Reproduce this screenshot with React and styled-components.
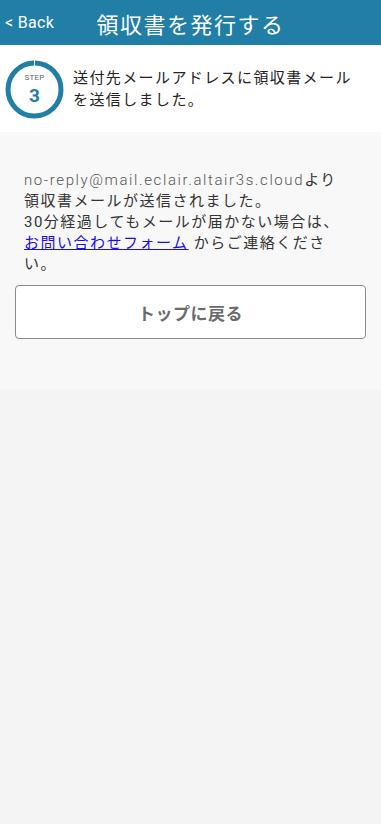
import React from "react";
import styled, { createGlobalStyle } from "styled-components";

const GlobalStyle = createGlobalStyle`
  html, body {
    margin: 0;
    padding: 0;
    background: #f4f4f4;
    font-family: Roboto, "Noto Sans CJK JP", sans-serif;
  }
`;

const Page = styled.div`
  min-height: 824px;
  background: #f4f4f4;
`;

const Header = styled.header`
  height: 45px;
  background: #217ea7;
  color: #fff;
  display: grid;
  grid-template-columns: 80px 1fr 80px;
  align-items: center;
`;

const BackLink = styled.a`
  padding-left: 5px;
  font-size: 16px;
  letter-spacing: 0.3px;
  color: #fff;
  text-decoration: none;
`;

const Title = styled.h1`
  margin: 0;
  text-align: center;
  font-size: 22px;
  font-weight: 400;
  letter-spacing: 1.5px;
`;

const StepBar = styled.div`
  background: #fff;
  height: 87px;
  display: flex;
  align-items: center;
  gap: 9px;
  padding-left: 5px;
`;

const Ring = styled.div`
  position: relative;
  width: 59px;
  height: 59px;
  flex: none;
  margin-top: 1px;
  svg {
    display: block;
  }
`;

const RingLabel = styled.div`
  position: absolute;
  inset: 0;
  display: flex;
  flex-direction: column;
  align-items: center;
  justify-content: center;
  padding-top: 1px;
`;

const StepWord = styled.span`
  font-size: 8px;
  color: #666;
  line-height: 1;
  letter-spacing: 0.2px;
`;

const StepNum = styled.span`
  font-size: 19px;
  font-weight: 700;
  color: #217ea7;
  line-height: 1;
  margin-top: 4px;
`;

const StepText = styled.p`
  margin: 0;
  font-size: 15px;
  line-height: 22px;
  color: #222;
  letter-spacing: 1.4px;
`;

const Panel = styled.section`
  background: #f8f8f8;
  padding: 38px 15px 50px;
`;

const Message = styled.p`
  margin: 0 16px 0 9px;
  font-size: 15px;
  line-height: 21px;
  color: #333;
  letter-spacing: 1.5px;
`;

const MailLine = styled.span`
  white-space: nowrap;
`;

const Mail = styled.span`
  color: #555;
  font-weight: 300;
  letter-spacing: 1.6px;
`;

const Link = styled.a`
  color: #1a0dee;
  text-decoration: underline;
`;

const TopButton = styled.button`
  margin-top: 10px;
  width: 100%;
  height: 54px;
  background: #fff;
  border: 1px solid #8a8a8a;
  border-radius: 4px;
  font-family: Roboto, "Noto Sans CJK JP", sans-serif;
  font-size: 17px;
  font-weight: 700;
  color: #6b6b6b;
  letter-spacing: 0.5px;
`;

function StepRing() {
  const r = 26.5;
  const c = 2 * Math.PI * r;
  return (
    <Ring>
      <svg width="59" height="59" viewBox="0 0 59 59">
        <circle
          cx="29.5"
          cy="29.5"
          r={r}
          fill="none"
          stroke="#217ea7"
          strokeWidth="5"
          strokeDasharray={`${c - 2} 2`}
          transform="rotate(-89 29.5 29.5)"
        />
      </svg>
      <RingLabel>
        <StepWord>STEP</StepWord>
        <StepNum>3</StepNum>
      </RingLabel>
    </Ring>
  );
}

export default function App() {
  return (
    <Page>
      <GlobalStyle />
      <Header>
        <BackLink href="#">&lt; Back</BackLink>
        <Title>領収書を発行する</Title>
        <span />
      </Header>
      <StepBar>
        <StepRing />
        <StepText>
          送付先メールアドレスに領収書メール
          <br />
          を送信しました。
        </StepText>
      </StepBar>
      <Panel>
        <Message>
          <MailLine>
            <Mail>no-reply@mail.eclair.altair3s.cloud</Mail>より
          </MailLine>
          <br />
          領収書メールが送信されました。
          <br />
          30分経過してもメールが届かない場合は、
          <Link href="#">お問い合わせフォーム</Link> からご連絡ください。
        </Message>
        <TopButton>トップに戻る</TopButton>
      </Panel>
    </Page>
  );
}
